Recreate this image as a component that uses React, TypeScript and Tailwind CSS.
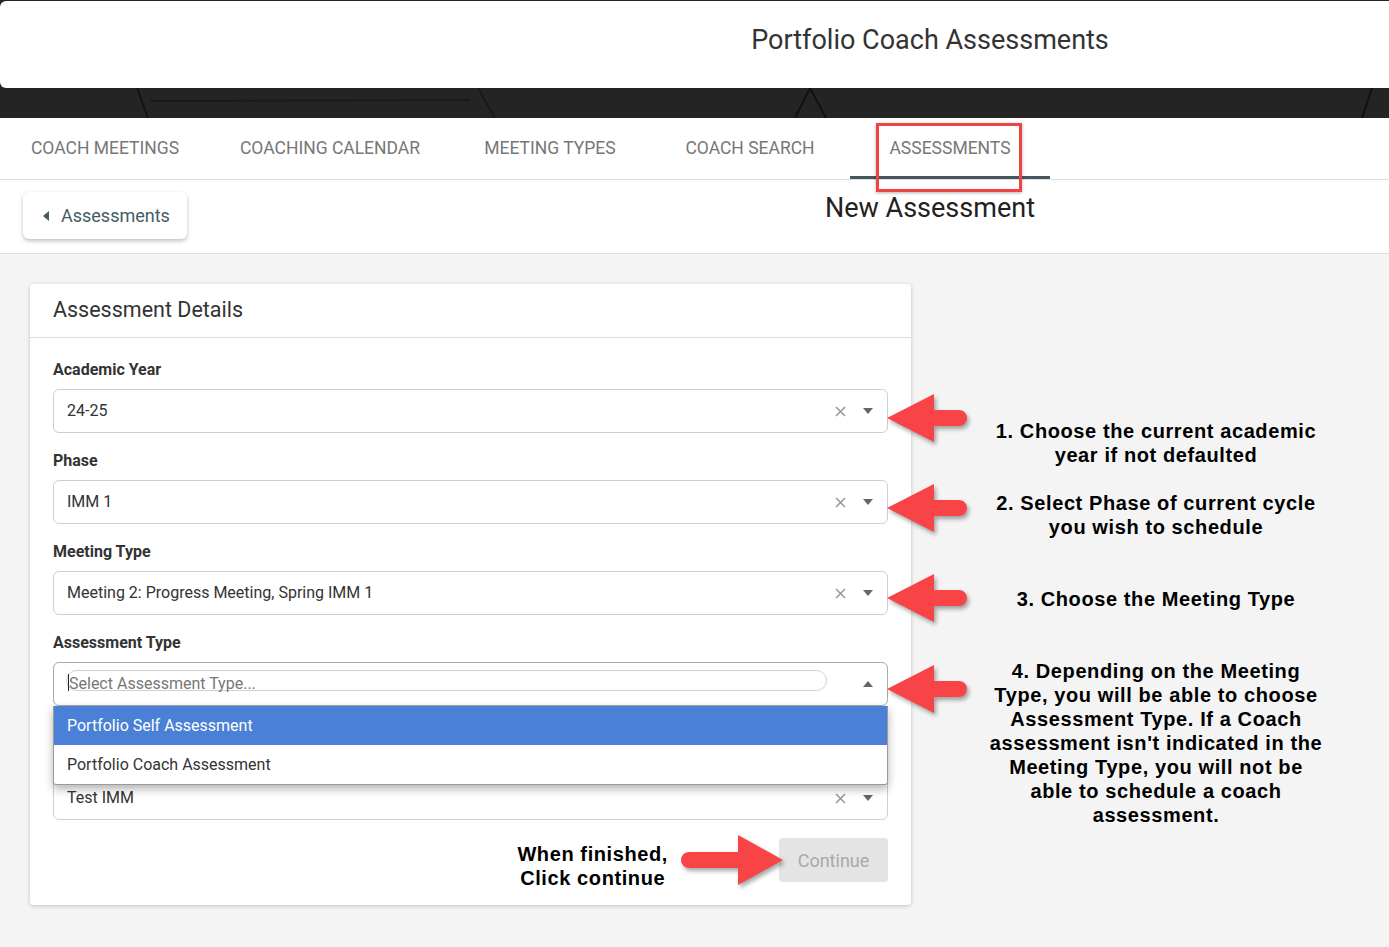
import { ReactNode } from 'react';

// red callout arrows used in the annotated screenshot
const ArrowLeft = ({ top }: { top: number }) => (
  <svg
    width="82"
    height="54"
    viewBox="0 0 82 54"
    className="absolute left-[886px] z-30 drop-shadow-[2px_3px_2px_rgba(0,0,0,0.35)]"
    style={{ top }}
  >
    <path
      d="M1 27 L48 3 L48 19 L73 19 A8 8 0 0 1 73 35 L48 35 L48 51 Z"
      fill="#f94447"
    />
  </svg>
);

const ArrowRight = () => (
  <svg
    width="104"
    height="54"
    viewBox="0 0 104 54"
    className="relative z-10 -mr-[5px] ml-[12px] drop-shadow-[2px_3px_2px_rgba(0,0,0,0.35)]"
  >
    <path
      d="M103 27 L58 2 L58 19 L9 19 A8 8 0 0 0 9 35 L58 35 L58 52 Z"
      fill="#f94447"
    />
  </svg>
);

const ClearIcon = () => (
  <svg width="11" height="11" viewBox="0 0 11 11" className="mr-[17px]">
    <path d="M1 1 L10 10 M10 1 L1 10" stroke="#9a9a9a" strokeWidth="1.6" />
  </svg>
);

const CaretDown = () => (
  <span className="h-0 w-0 border-x-[5px] border-t-[6px] border-x-transparent border-t-[#666]" />
);

const Field = ({ label, children }: { label: string; children: ReactNode }) => (
  <div className="mb-[18px]">
    <div className="mb-[9px] text-[16px] font-bold leading-[20px] text-[#333]">
      {label}
    </div>
    {children}
  </div>
);

const Select = ({ value }: { value: string }) => (
  <div className="flex h-[44px] items-center rounded-[6px] border border-[#cfcfcf] bg-white pl-[13px] pr-[14px]">
    <span className="flex-1 text-[16px] text-[#333]">{value}</span>
    <ClearIcon />
    <CaretDown />
  </div>
);

const tabs = [
  { name: 'Coach Meetings', w: 'w-[210px]' },
  { name: 'Coaching Calendar', w: 'w-[240px]' },
  { name: 'Meeting Types', w: 'w-[200px]' },
  { name: 'Coach Search', w: 'w-[200px]' },
  { name: 'Assessments', w: 'w-[200px]', active: true },
];

const notes = [
  { mt: 'mt-[135px]', text: '1. Choose the current academic year if not defaulted' },
  { mt: 'mt-[24px]', text: '2. Select Phase of current cycle you wish to schedule' },
  { mt: 'mt-[48px]', text: '3. Choose the Meeting Type' },
  {
    mt: 'mt-[48px]',
    text: "4. Depending on the Meeting Type, you will be able to choose Assessment Type. If a Coach assessment isn't indicated in the Meeting Type, you will not be able to schedule a coach assessment.",
  },
];

export default function App() {
  return (
    <div className="min-h-screen bg-[#f4f4f4] font-[Roboto,sans-serif]">
      {/* Banner */}
      <div className="relative h-[118px] overflow-hidden bg-[#242424]">
        <svg className="absolute inset-0" width="1389" height="118">
          <path d="M137 88 L148 118" stroke="#121212" strokeWidth="2" />
          <path d="M150 101 L470 100" stroke="#1a1a1a" strokeWidth="2" />
          <path d="M478 88 L495 118" stroke="#161616" strokeWidth="1.5" />
          <path d="M795 118 L810 88 L826 118" stroke="#121212" strokeWidth="2" fill="none" />
          <path d="M1372 88 L1362 118" stroke="#101010" strokeWidth="2" />
        </svg>
        <div className="relative mt-px flex h-[87px] justify-center rounded-l-[6px] bg-white pl-[471px] pt-[24px]">
          <h1 className="text-[27px] leading-[30px] text-[#333]">
            Portfolio Coach Assessments
          </h1>
        </div>
      </div>

      {/* Tabs */}
      <nav className="flex h-[62px] border-b border-[#ddd] bg-white">
        {tabs.map((tab) => (
          <div
            key={tab.name}
            className={`relative flex items-center justify-center text-[17.5px] uppercase text-[#777] ${tab.w}`}
          >
            {tab.name}
            {tab.active && (
              <>
                <span className="absolute bottom-0 left-0 h-[3px] w-full bg-[#47555e]" />
                <span className="absolute left-[26px] top-[5px] z-30 h-[69px] w-[146px] border-[3px] border-[#ef4444] shadow-[0_1px_3px_rgba(0,0,0,0.3)]" />
              </>
            )}
          </div>
        ))}
      </nav>

      {/* Sub header */}
      <div className="grid h-[74px] grid-cols-[471px_1fr] border-b border-[#ddd] bg-white">
        <div>
          <button className="ml-[23px] mt-[12px] flex h-[47px] w-[164px] items-center rounded-[6px] bg-white pl-[20px] text-[18px] text-[#455a64] shadow-[0_2px_4px_rgba(0,0,0,0.25)]">
            <span className="mr-[12px] h-0 w-0 border-y-[5px] border-r-[6px] border-y-transparent border-r-[#455a64]" />
            Assessments
          </button>
        </div>
        <h2 className="pt-[13px] text-center text-[27px] leading-[30px] text-[#222]">
          New Assessment
        </h2>
      </div>

      {/* Body */}
      <div className="relative flex pl-[30px] pt-[30px]">
        <div className="w-[881px] rounded-[4px] bg-white shadow-[0_1px_4px_rgba(0,0,0,0.2)]">
          <div className="flex h-[54px] items-center border-b border-[#ddd] pl-[23px] text-[21.5px] text-[#333]">
            Assessment Details
          </div>
          <div className="px-[23px] pb-[18px] pt-[22px]">
            <Field label="Academic Year">
              <Select value="24-25" />
            </Field>
            <Field label="Phase">
              <Select value="IMM 1" />
            </Field>
            <Field label="Meeting Type">
              <Select value="Meeting 2: Progress Meeting, Spring IMM 1" />
            </Field>
            <div>
              <div className="mb-[9px] text-[16px] font-bold leading-[20px] text-[#333]">
                Assessment Type
              </div>
              <div className="relative">
                <div className="flex h-[44px] rounded-[6px] border border-[#a9a9a9] bg-white pl-[12px] pr-[14px]">
                  <div className="mt-[7px] flex h-[21px] w-[761px] items-center rounded-full border border-[#d0d0d0] pl-[1px]">
                    <span className="mt-[4px] h-[17px] w-px bg-[#222]" />
                    <span className="pt-[7px] text-[16px] text-[#777]">
                      Select Assessment Type...
                    </span>
                  </div>
                  <span className="ml-auto flex items-center">
                    <span className="h-0 w-0 border-x-[5px] border-b-[6px] border-x-transparent border-b-[#666]" />
                  </span>
                </div>
                <div className="absolute left-0 right-0 top-full z-20 overflow-hidden rounded-b-[3px] border border-t-0 border-[#9a9a9a] bg-white shadow-[0_4px_10px_rgba(0,0,0,0.3)]">
                  <div className="flex h-[39px] items-center bg-[#4a80d6] pl-[13px] text-[16px] text-white">
                    Portfolio Self Assessment
                  </div>
                  <div className="flex h-[39px] items-center pl-[13px] text-[16px] text-[#333]">
                    Portfolio Coach Assessment
                  </div>
                </div>
              </div>
            </div>
            <div className="mt-[70px]">
              <Select value="Test IMM" />
            </div>

            <div className="mt-[13px] flex items-center justify-end">
              <div className="translate-y-[6px] text-center font-['Liberation_Sans',Arial,sans-serif] text-[20px] font-bold leading-[24px] tracking-[0.6px] text-black">
                When finished,
                <br />
                Click continue
              </div>
              <ArrowRight />
              <button className="h-[44px] w-[109px] rounded-[4px] bg-[#e4e4e4] text-[18px] text-[#a9a9a9]">
                Continue
              </button>
            </div>
          </div>
        </div>

        {/* Annotations */}
        <ArrowLeft top={137} />
        <ArrowLeft top={227} />
        <ArrowLeft top={317} />
        <ArrowLeft top={408} />
        <div className="ml-[75px] w-[340px] text-center font-['Liberation_Sans',Arial,sans-serif] text-[20px] font-bold leading-[24px] tracking-[0.6px] text-black">
          {notes.map((n, i) => (
            <p key={i} className={n.mt}>
              {n.text}
            </p>
          ))}
        </div>
      </div>
    </div>
  );
}
